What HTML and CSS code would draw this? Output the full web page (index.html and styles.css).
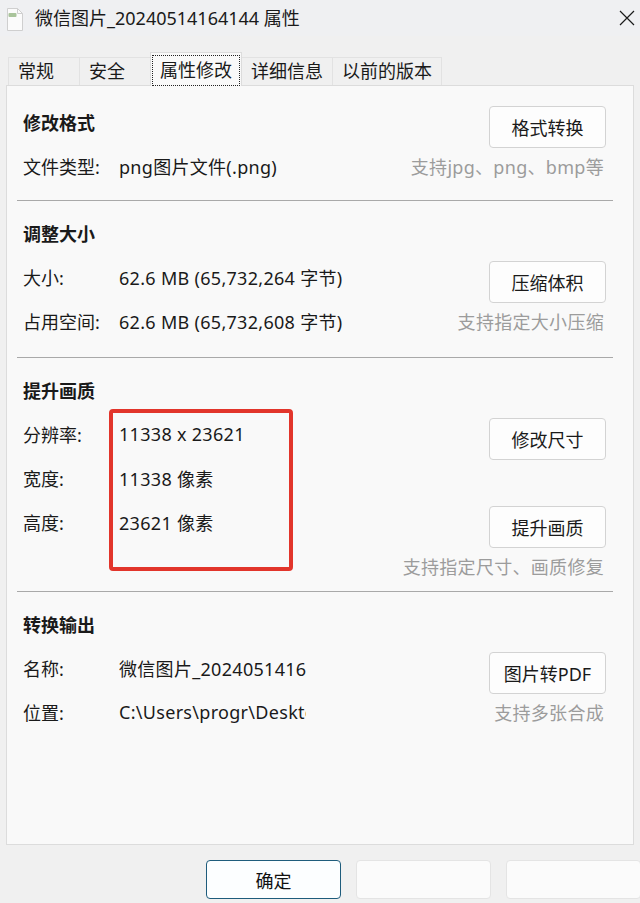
FILE: index.html
```html
<!DOCTYPE html>
<html lang="zh-CN">
<head>
    <meta charset="UTF-8">
    <meta name="viewport" content="width=device-width, initial-scale=1.0">
    <title>微信图片_20240514164144 属性</title>
    <link rel="stylesheet" href="styles.css">
</head>
<body>

<!-- Title bar -->
<div class="titlebar">
    <svg class="file-icon" width="18" height="23" viewBox="0 0 18 23">
        <path d="M1.5 .5h10l5 5v17h-15z" fill="#fbfbfb" stroke="#cfcfcf"/>
        <path d="M11.5 .5v5h5" fill="none" stroke="#cfcfcf"/>
        <rect x="2.5" y="5" width="8" height="4" rx="1" fill="#a9c49b"/>
    </svg>
    <span class="title">微信图片_20240514164144 属性</span>
    <svg class="close" width="16" height="16" viewBox="0 0 16 16">
        <path d="M1 1l14 14M15 1L1 15" stroke="#1b1b1b" stroke-width="1.2"/>
    </svg>
</div>

<!-- Tabs -->
<div class="tabs">
    <div class="tab">常规</div>
    <div class="tab">安全</div>
    <div class="tab active"><span class="focus">属性修改</span></div>
    <div class="tab">详细信息</div>
    <div class="tab">以前的版本</div>
</div>

<div class="panel">
    <div class="group first">
        <div class="row">
            <h2>修改格式</h2>
            <button class="btn">格式转换</button>
        </div>
        <div class="row">
            <span class="label">文件类型:</span>
            <span class="value">png图片文件(.png)</span>
            <span class="hint">支持jpg、png、bmp等</span>
        </div>
    </div>

    <div class="group">
        <div class="row">
            <h2>调整大小</h2>
        </div>
        <div class="row">
            <span class="label">大小:</span>
            <span class="value">62.6 MB (65,732,264 字节)</span>
            <button class="btn">压缩体积</button>
        </div>
        <div class="row">
            <span class="label">占用空间:</span>
            <span class="value">62.6 MB (65,732,608 字节)</span>
            <span class="hint">支持指定大小压缩</span>
        </div>
    </div>

    <div class="group quality">
        <div class="row">
            <h2>提升画质</h2>
        </div>
        <div class="row">
            <span class="label">分辨率:</span>
            <span class="value">11338 x 23621</span>
            <button class="btn">修改尺寸</button>
        </div>
        <div class="row">
            <span class="label">宽度:</span>
            <span class="value">11338 像素</span>
        </div>
        <div class="row">
            <span class="label">高度:</span>
            <span class="value">23621 像素</span>
            <button class="btn">提升画质</button>
        </div>
        <div class="row">
            <span class="hint">支持指定尺寸、画质修复</span>
        </div>
        <!-- red highlight drawn over the values -->
        <div class="mark"></div>
    </div>

    <div class="group last">
        <div class="row">
            <h2>转换输出</h2>
        </div>
        <div class="row">
            <span class="label">名称:</span>
            <span class="value clip">微信图片_20240514164144.png</span>
            <button class="btn">图片转PDF</button>
        </div>
        <div class="row">
            <span class="label">位置:</span>
            <span class="value clip">C:\Users\progr\Desktop</span>
            <span class="hint">支持多张合成</span>
        </div>
    </div>
</div>

<div class="footer">
    <button class="fbtn primary">确定</button>
    <button class="fbtn blank"></button>
    <button class="fbtn blank"></button>
</div>

</body>
</html>
```

FILE: styles.css
```css
body {
    margin: 0;
    width: 640px;
    height: 903px;
    overflow: hidden;
    background-color: #f0f0f0;
    font-family: "Noto Sans", "Noto Sans CJK SC", sans-serif;
    font-size: 18px;
    color: #1a1a1a;
}
.titlebar {
    display: flex;
    align-items: center;
    height: 36px;
    background-color: #eff0f2;
}
.file-icon {
    margin-left: 6px;
    margin-right: 11px;
    margin-top: 3px;
}
.title {
    flex: 1;
    line-height: 1;
}
.close {
    margin-right: 5px;
}
.tabs {
    display: flex;
    align-items: flex-end;
    height: 49px;
    padding-left: 8px;
}
.tab {
    box-sizing: border-box;
    height: 28px;
    min-width: 72px;
    padding: 0 9px;
    line-height: 27px;
    border: 1px solid #e2e2e2;
    border-bottom: none;
    margin-right: -1px;
    background-color: #f0f0f0;
}
.tab.active {
    position: relative;
    z-index: 1;
    height: 34px;
    margin-bottom: -1px;
    padding: 2px 1px 2px 1px;
    background-color: #f9f9f9;
    border-color: #dcdcdc;
}
.focus {
    display: block;
    height: 29px;
    padding: 0 7px;
    line-height: 28px;
    border: 1px dotted #222;
}
.panel {
    box-sizing: border-box;
    height: 760px;
    margin: 0 6px;
    background-color: #f9f9f9;
    border: 1px solid #dcdcdc;
}
.group {
    position: relative;
    margin: 0 20px 0 10px;
    padding: 10px 7px 14px 6px;
    border-bottom: 1px solid #a9a9a9;
}
.group.first {
    padding-top: 14px;
    padding-bottom: 12px;
}
.group.quality {
    padding-bottom: 3px;
}
.group.last {
    border-bottom: none;
}
.row {
    display: flex;
    align-items: center;
    height: 44px;
    white-space: nowrap;
}
h2 {
    margin: 0;
    font-size: 18px;
    font-weight: bold;
}
.label {
    width: 96px;
    flex-shrink: 0;
}
.value {
    letter-spacing: 0.3px;
}
.value.clip {
    width: 187px;
    overflow: hidden;
}
.btn {
    margin-left: auto;
    margin-top: 10px;
    width: 117px;
    height: 42px;
    background-color: #fdfdfd;
    border: 1px solid #d3d3d3;
    border-radius: 4px;
    font-family: inherit;
    font-size: 18px;
    color: #1a1a1a;
    padding: 0;
}
.hint {
    margin-left: auto;
    margin-right: 2px;
    letter-spacing: 0.3px;
    color: #9c9c9c;
}
.mark {
    position: absolute;
    left: 92px;
    top: 51px;
    width: 184px;
    height: 162px;
    box-sizing: border-box;
    border: 4px solid #e2352b;
    border-radius: 4px;
}
.footer {
    display: flex;
    justify-content: flex-end;
    gap: 15px;
    padding-top: 15px;
    margin-right: -1px;
}
.fbtn {
    width: 135px;
    height: 39px;
    border-radius: 4px;
    font-family: inherit;
    font-size: 18px;
    color: #111;
    padding: 0;
}
.fbtn.primary {
    background-color: #fcfeff;
    border: 1px solid #1e5c7c;
}
.fbtn.blank {
    background-color: #fbfbfb;
    border: 1px solid #e4e4e4;
}
```
